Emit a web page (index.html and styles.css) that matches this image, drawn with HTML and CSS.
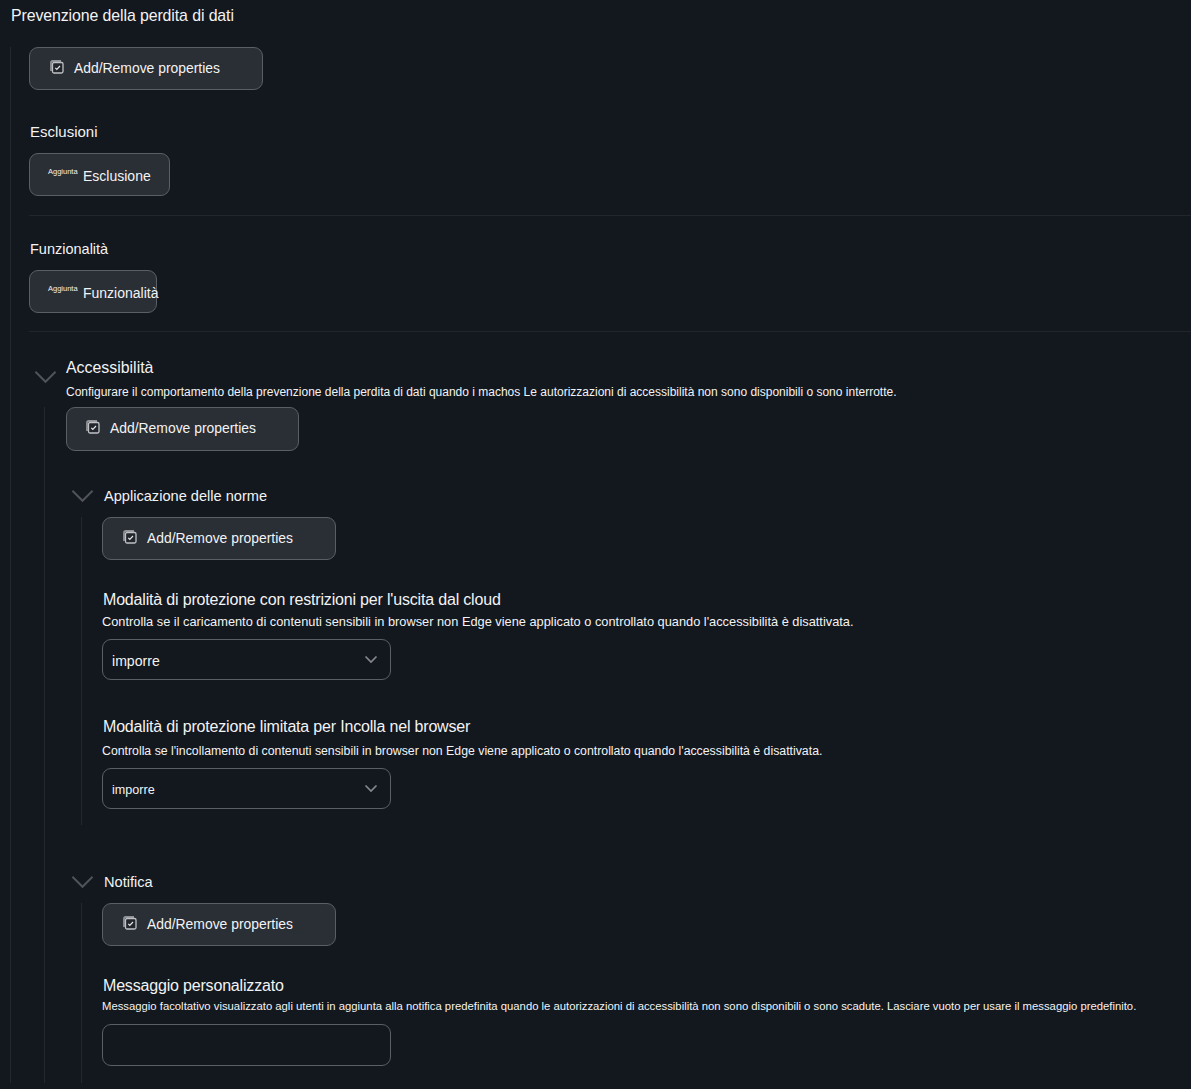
FILE: index.html
```html
<!DOCTYPE html>
<html lang="it">
<head>
<meta charset="utf-8">
<title>Prevenzione della perdita di dati</title>
<link rel="stylesheet" href="styles.css">
</head>
<body>
<svg width="0" height="0" class="defs">
  <symbol id="props" viewBox="0 0 14 14">
    <path d="M1 11V2.500A1.500 1.500 0 0 1 2.500 1H11" fill="none" stroke="#8f9297" stroke-width="1.800"/>
    <rect x="2.500" y="2.500" width="10.500" height="10.500" rx="1.500" fill="#22262d" stroke="#c0c2c5" stroke-width="1.300"/>
    <path d="M5.300 7.800l1.500 1.600L10 6" fill="none" stroke="#e6e7e8" stroke-width="1.200"/>
  </symbol>
  <symbol id="chev" viewBox="0 0 24 14">
    <path d="M1.500 1.500L12 12L22.500 1.500" fill="none" stroke="#50545a" stroke-width="2"/>
  </symbol>
  <symbol id="chev-sm" viewBox="0 0 14 9">
    <path d="M1.500 1.500L7 7L12.500 1.500" fill="none" stroke="#85888c" stroke-width="1.700"/>
  </symbol>
</svg>

<h1 class="page-title">Prevenzione della perdita di dati</h1>

<div class="tree root-tree">
  <button class="btn btn-props" type="button"><svg class="ico"><use href="#props"/></svg><span class="btn-text">Add/Remove properties</span></button>

  <h2 class="group-label first-label">Esclusioni</h2>
  <button class="btn btn-add btn-excl" type="button"><span class="tiny">Aggiunta</span><span class="add-text">Esclusione</span></button>
  <hr class="rule rule-one">

  <h2 class="group-label">Funzionalità</h2>
  <button class="btn btn-add btn-func" type="button"><span class="tiny">Aggiunta</span><span class="add-text">Funzionalità</span></button>
  <hr class="rule rule-two">

  <section class="section">
    <svg class="chev chev-outer"><use href="#chev"/></svg>
    <div class="section-head">
      <h2 class="section-title">Accessibilità</h2>
      <p class="section-desc">Configurare il comportamento della prevenzione della perdita di dati quando i machos Le autorizzazioni di accessibilità non sono disponibili o sono interrotte.</p>
    </div>
    <div class="tree level-two">
      <button class="btn btn-props btn-section" type="button"><svg class="ico"><use href="#props"/></svg><span class="btn-text">Add/Remove properties</span></button>

      <section class="sub">
        <div class="sub-head"><svg class="chev"><use href="#chev"/></svg><h3 class="sub-title">Applicazione delle norme</h3></div>
        <div class="tree level-three tree-policy">
          <button class="btn btn-props" type="button"><svg class="ico"><use href="#props"/></svg><span class="btn-text">Add/Remove properties</span></button>

          <h4 class="field-label label-a">Modalità di protezione con restrizioni per l'uscita dal cloud</h4>
          <p class="field-desc desc-a">Controlla se il caricamento di contenuti sensibili in browser non Edge viene applicato o controllato quando l'accessibilità è disattivata.</p>
          <div class="select"><span>imporre</span><svg class="chev-small"><use href="#chev-sm"/></svg></div>

          <h4 class="field-label label-b">Modalità di protezione limitata per Incolla nel browser</h4>
          <p class="field-desc desc-b">Controlla se l'incollamento di contenuti sensibili in browser non Edge viene applicato o controllato quando l'accessibilità è disattivata.</p>
          <div class="select select-narrow"><span>imporre</span><svg class="chev-small"><use href="#chev-sm"/></svg></div>
        </div>
      </section>

      <section class="sub sub-notify">
        <div class="sub-head"><svg class="chev"><use href="#chev"/></svg><h3 class="sub-title">Notifica</h3></div>
        <div class="tree level-three">
          <button class="btn btn-props" type="button"><svg class="ico"><use href="#props"/></svg><span class="btn-text">Add/Remove properties</span></button>

          <h4 class="field-label label-c">Messaggio personalizzato</h4>
          <p class="field-desc desc-c">Messaggio facoltativo visualizzato agli utenti in aggiunta alla notifica predefinita quando le autorizzazioni di accessibilità non sono disponibili o sono scadute. Lasciare vuoto per usare il messaggio predefinito.</p>
          <div class="text-input"></div>
        </div>
      </section>
    </div>
  </section>
</div>
</body>
</html>
```
FILE: styles.css
```css
* { box-sizing: border-box; }
html, body { margin: 0; padding: 0; }
body {
  width: 1191px;
  height: 1089px;
  overflow: hidden;
  background: #13171e;
  color: #f2f3f4;
  font-family: "Liberation Sans", Arial, sans-serif;
}
.defs { position: absolute; }
h1, h2, h3, h4, p, hr { margin: 0; font-weight: 400; }

.page-title {
  font-size: 15.900px;
  line-height: 20px;
  padding: 6px 0 0 11px;
  height: 47px;
  letter-spacing: -0.1px;
}

.tree { border-left: 1px solid #24282e; }
.root-tree { margin-left: 10px; padding-left: 18px; }
.level-two { margin-left: 15px; padding-left: 21px; margin-top: 7px; }
.level-three { margin-left: 15px; padding-left: 20px; padding-bottom: 17px; }
.tree-policy { height: 308px; padding-bottom: 0; }

.btn {
  display: flex;
  align-items: center;
  width: 234px;
  height: 43px;
  padding: 0 0 0 20px;
  background: #2a2e35;
  border: 1px solid #5a5e65;
  border-radius: 9px;
  color: #f2f3f4;
  font: inherit;
  font-size: 13.900px;
  text-align: left;
}
.btn-section { width: 233px; height: 44px; padding-left: 19px; margin-bottom: -1px; }
.btn-text { margin-top: -2px; }
.ico { width: 14px; height: 14px; margin: -4px 10px 0 0; flex: none; }
.btn-add { padding-left: 18px; }
.btn-excl { width: 141px; }
.btn-func { width: 128px; }
.tiny {
  font-size: 7.500px;
  line-height: 10px;
  width: 35px;
  flex: none;
  align-self: flex-start;
  margin-top: 13px;
  white-space: nowrap;
}
.add-text { font-size: 14px; white-space: nowrap; padding-top: 2px; }

.group-label { font-size: 14.500px; line-height: 20px; padding-left: 1px; margin-bottom: 11px; }
.first-label { margin-top: 32px; font-size: 15px; }
.rule { border: 0; border-top: 1px solid #22262c; }
.rule-one { margin: 19px 0 23px; }
.rule-two { margin: 18px 0 26px; }

.section { position: relative; }
.chev { width: 23px; height: 14px; flex: none; display: block; }
.chev-outer { position: absolute; left: 5px; top: 12px; }
.section-head { padding-left: 37px; }
.section-title { font-size: 15.900px; line-height: 20px; letter-spacing: 0; }
.section-desc { font-size: 12px; line-height: 16px; margin-top: 6px; white-space: nowrap; }

.sub { margin-top: 36px; }
.sub-notify { margin-top: 47px; }
.sub-head { display: flex; align-items: center; gap: 10px; margin-left: 5px; height: 20px; margin-bottom: 11px; }
.sub-title { font-size: 14.600px; line-height: 20px; }

.field-label { font-size: 16px; line-height: 20px; padding-left: 1px; white-space: nowrap; letter-spacing: -0.18px; }
.label-a { margin-top: 30px; }
.label-b { margin-top: 37px; }
.label-c { margin-top: 30px; }
.field-desc { line-height: 16px; white-space: nowrap; }
.desc-a { font-size: 12.800px; margin-top: 4px; margin-bottom: 9px; }
.desc-b { font-size: 12.300px; margin-top: 6px; margin-bottom: 9px; }
.desc-c { font-size: 11.300px; margin-top: 2px; margin-bottom: 10px; }

.select, .text-input {
  width: 289px;
  height: 41px;
  border: 1px solid #5a5e65;
  border-radius: 9px;
  background: #13171e;
}
.text-input { height: 42px; }
.select {
  display: flex;
  align-items: center;
  justify-content: space-between;
  padding: 2px 12px 0 9px;
  font-size: 14.100px;
}
.select-narrow { font-size: 12.600px; }
.chev-small { width: 14px; height: 9px; margin-top: -3px; }
```
